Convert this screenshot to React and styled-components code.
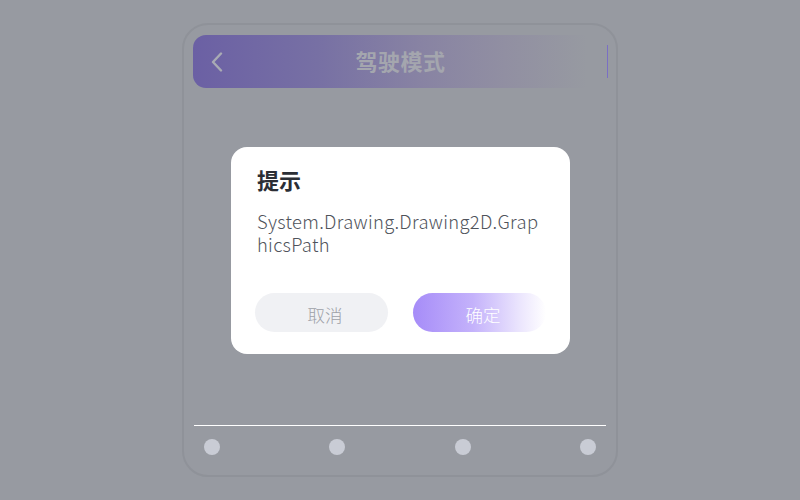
import styled, { createGlobalStyle } from "styled-components";

const GlobalStyle = createGlobalStyle`
  html, body {
    margin: 0;
    padding: 0;
    width: 800px;
    height: 500px;
    overflow: hidden;
    background: #979aa1;
    font-family: "Noto Sans CJK SC", "Noto Sans", sans-serif;
  }
`;

const DOTS = [0, 1, 2, 3];

export default function App() {
  return (
    <>
      <GlobalStyle />
      <Page>
        <Phone>
          <Header>
            <BackButton aria-label="back">
              <svg width="14" height="20" viewBox="0 0 14 20" fill="none">
                <path
                  d="M11 1.5 L3 10 L11 18.5"
                  stroke="#a9abb4"
                  strokeWidth="2.4"
                  strokeLinecap="round"
                  strokeLinejoin="round"
                />
              </svg>
            </BackButton>
            <HeaderTitle>驾驶模式</HeaderTitle>
          </Header>
          <Body />
          <Divider />
          <DotRow>
            {DOTS.map((d) => (
              <Dot key={d} />
            ))}
          </DotRow>
        </Phone>
      </Page>

      <Overlay>
        <Dialog role="dialog">
          <DialogTitle>提示</DialogTitle>
          <DialogText>System.Drawing.Drawing2D.GraphicsPath</DialogText>
          <Actions>
            <ActionButton>取消</ActionButton>
            <ActionButton $primary>确定</ActionButton>
          </Actions>
        </Dialog>
      </Overlay>
    </>
  );
}

/* === page === */
const Page = styled.div`
  width: 800px;
  height: 500px;
  display: flex;
  justify-content: center;
  padding-top: 23px;
  box-sizing: border-box;
`;

const Phone = styled.div`
  width: 436px;
  height: 454px;
  box-sizing: border-box;
  border: 2px solid #8f9299;
  border-radius: 26px;
  padding: 10px 8px 0 9px;
  display: flex;
  flex-direction: column;
`;

const Header = styled.div`
  position: relative;
  height: 53px;
  flex: none;
  border-radius: 13px 0 0 13px;
  background: linear-gradient(
    90deg,
    #6b60a4 0%,
    #7770a4 30%,
    #8883a3 55%,
    #918fa2 75%,
    #979aa1 95%
  );
  display: flex;
  align-items: center;
  justify-content: center;

  &::after {
    content: "";
    position: absolute;
    right: 0;
    top: 10px;
    bottom: 10px;
    width: 1.5px;
    background: #7a6fc4;
  }
`;

const BackButton = styled.span`
  position: absolute;
  left: 17px;
  top: 50%;
  transform: translateY(-50%);
  display: flex;
`;

const HeaderTitle = styled.span`
  font-size: 22px;
  line-height: 26px;
  margin-top: -4px;
  font-weight: 700;
  color: #a4a6ae;
  letter-spacing: 0.5px;
`;

const Body = styled.div`
  flex: 1;
`;

const Divider = styled.div`
  height: 1.5px;
  margin: 0 2px 0 1px;
  background: #ffffff;
`;

const DotRow = styled.div`
  display: flex;
  justify-content: space-between;
  padding: 13px 12px 20px 11px;
`;

const Dot = styled.span`
  width: 16px;
  height: 16px;
  border-radius: 50%;
  background: #c9ccd5;
`;

/* === dialog === */
const Overlay = styled.div`
  position: fixed;
  inset: 0;
  display: flex;
  align-items: center;
  justify-content: center;
  padding-left: 1px;
  padding-top: 1px;
`;

const Dialog = styled.div`
  width: 339px;
  height: 207px;
  box-sizing: border-box;
  background: #ffffff;
  border-radius: 16px;
  padding: 17px 24px 22px 24px;
  display: flex;
  flex-direction: column;
`;

const DialogTitle = styled.div`
  padding-left: 2px;
  font-size: 22px;
  line-height: 30px;
  font-weight: 700;
  color: #2b2e35;
`;

const DialogText = styled.div`
  margin-top: 16px;
  padding-left: 2px;
  width: 290px;
  font-size: 18.4px;
  line-height: 23px;
  font-weight: 300;
  letter-spacing: 0.3px;
  color: #4f535b;
  word-break: break-all;
`;

const Actions = styled.div`
  margin-top: auto;
  display: flex;
  gap: 25px;
`;

const ActionButton = styled.button`
  all: unset;
  box-sizing: border-box;
  width: 133px;
  height: 39px;
  padding: 3px 0 0 7px;
  border-radius: 9999px;
  display: flex;
  align-items: center;
  justify-content: center;
  font-family: "Noto Sans CJK SC", sans-serif;
  font-size: 17.5px;
  font-weight: 300;
  color: ${({ $primary }) => ($primary ? "#ffffff" : "#9ea1a8")};
  background: ${({ $primary }) =>
    $primary
      ? "linear-gradient(90deg, #a68cf8 0%, #c4b2fb 45%, #ebe5fd 80%, #ffffff 100%)"
      : "#f0f1f4"};
`;
